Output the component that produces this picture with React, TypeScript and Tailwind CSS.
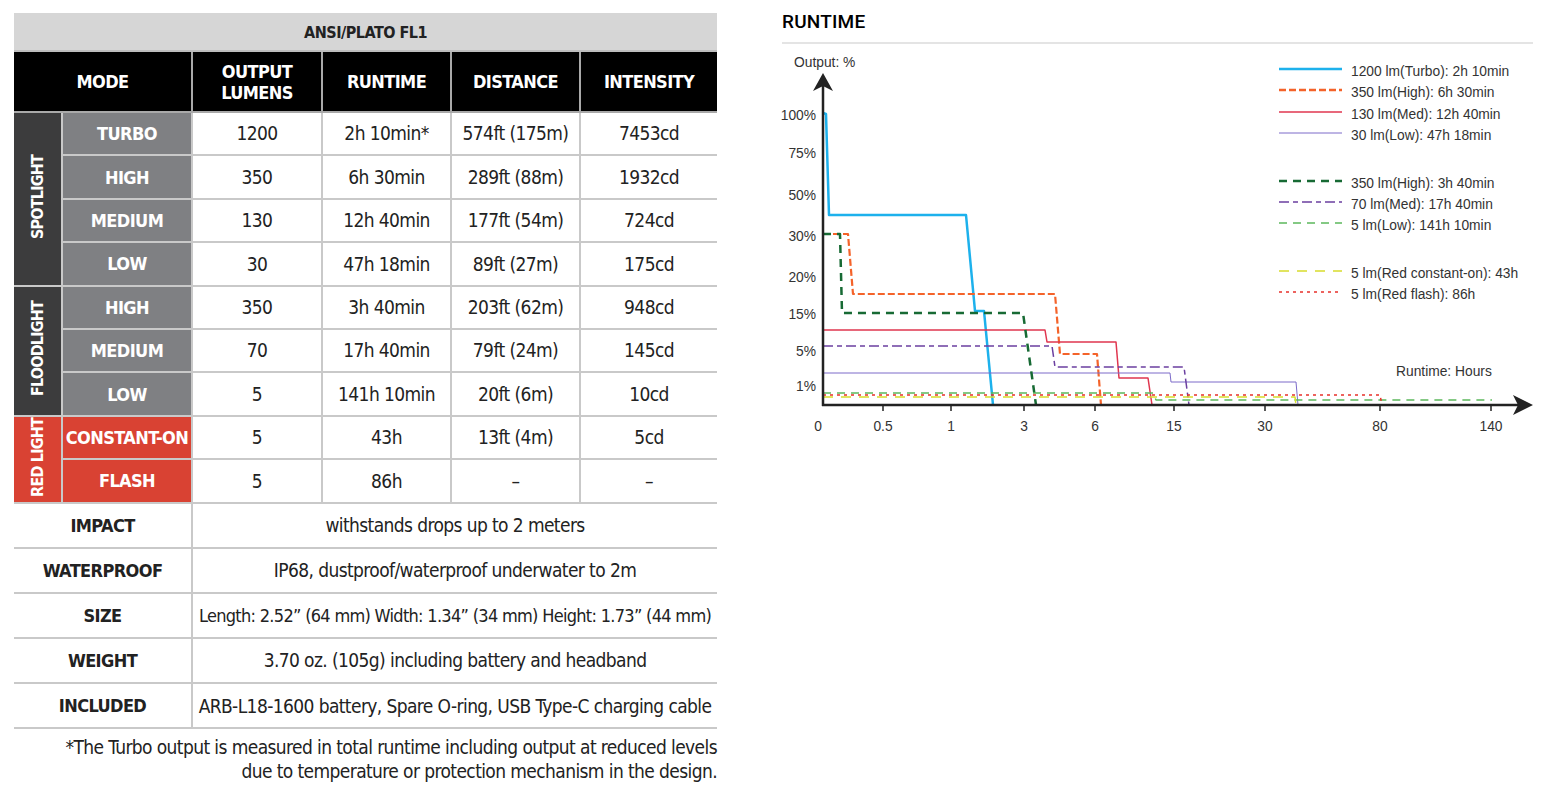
import React from 'react';

type Row = [string, string, string, string, string];

const groups: { name: string; groupBg: string; modeBg: string; rows: Row[] }[] = [
  {
    name: 'SPOTLIGHT',
    groupBg: 'bg-[#3c3c3d]',
    modeBg: 'bg-[#7f8083]',
    rows: [
      ['TURBO', '1200', '2h 10min*', '574ft (175m)', '7453cd'],
      ['HIGH', '350', '6h 30min', '289ft (88m)', '1932cd'],
      ['MEDIUM', '130', '12h 40min', '177ft (54m)', '724cd'],
      ['LOW', '30', '47h 18min', '89ft (27m)', '175cd'],
    ],
  },
  {
    name: 'FLOODLIGHT',
    groupBg: 'bg-[#3c3c3d]',
    modeBg: 'bg-[#7f8083]',
    rows: [
      ['HIGH', '350', '3h 40min', '203ft (62m)', '948cd'],
      ['MEDIUM', '70', '17h 40min', '79ft (24m)', '145cd'],
      ['LOW', '5', '141h 10min', '20ft (6m)', '10cd'],
    ],
  },
  {
    name: 'RED LIGHT',
    groupBg: 'bg-[#d94233]',
    modeBg: 'bg-[#d94233]',
    rows: [
      ['CONSTANT-ON', '5', '43h', '13ft (4m)', '5cd'],
      ['FLASH', '5', '86h', '–', '–'],
    ],
  },
];

const specs = [
  ['IMPACT', 'withstands drops up to 2 meters'],
  ['WATERPROOF', 'IP68, dustproof/waterproof underwater to 2m'],
  ['SIZE', 'Length: 2.52” (64 mm) Width: 1.34” (34 mm) Height: 1.73” (44 mm)'],
  ['WEIGHT', '3.70 oz. (105g) including battery and headband'],
  ['INCLUDED', 'ARB-L18-1600 battery, Spare O-ring, USB Type-C charging cable'],
];

// chart series, in page coordinates
const series = [
  { pts: '823,115 826,116 829,217 966,217 975,313 984,313 993,407', color: '#1db1ec', w: 2.5, dash: '' },
  { pts: '823,236 848,236 853,296 1055,296 1060,356 1097,356 1101,407', color: '#f4632a', w: 2.2, dash: '7 3' },
  { pts: '823,332 1045,332 1047,344 1116,344 1119,380 1148,380 1152,407', color: '#e0364f', w: 1.5, dash: '' },
  { pts: '823,375 1170,375 1171,384 1296,384 1298,407', color: '#7c6bc9', w: 1, dash: '' },
  { pts: '823,236 840,236 842,315 1023,315 1036,407', color: '#176a34', w: 2.5, dash: '8 6' },
  { pts: '823,348 1052,348 1055,369 1184,369 1189,407', color: '#6b3fa0', w: 1.5, dash: '10 4 5 4' },
  { pts: '823,395 1153,395 1156,402 1492,402', color: '#5cb85c', w: 1.5, dash: '8 6' },
  { pts: '823,399 1295,399 1296,407', color: '#d7dc2c', w: 1.5, dash: '10 8' },
  { pts: '823,397 1380,397 1382,407', color: '#e8302a', w: 1.5, dash: '3 4' },
];

const legend = [
  { y: 71, color: '#1db1ec', w: 2.5, dash: '', label: '1200 lm(Turbo): 2h 10min' },
  { y: 92, color: '#f4632a', w: 2.5, dash: '7 3', label: '350 lm(High): 6h 30min' },
  { y: 114, color: '#e0364f', w: 1.5, dash: '', label: '130 lm(Med): 12h 40min' },
  { y: 135, color: '#7c6bc9', w: 1, dash: '', label: '30 lm(Low): 47h 18min' },
  { y: 183, color: '#176a34', w: 2.5, dash: '8 6', label: '350 lm(High): 3h 40min' },
  { y: 204, color: '#6b3fa0', w: 1.5, dash: '10 4 5 4', label: '70 lm(Med): 17h 40min' },
  { y: 225, color: '#5cb85c', w: 1.5, dash: '8 6', label: '5 lm(Low): 141h 10min' },
  { y: 273, color: '#d7dc2c', w: 1.5, dash: '10 8', label: '5 lm(Red constant-on): 43h' },
  { y: 294, color: '#e8302a', w: 1.5, dash: '3 4', label: '5 lm(Red flash): 86h' },
];

const yTicks: [string, number][] = [
  ['100%', 115], ['75%', 153], ['50%', 195], ['30%', 236], ['20%', 277], ['15%', 314], ['5%', 351], ['1%', 386],
];
const xTicks: [string, number][] = [
  ['0.5', 883], ['1', 951], ['3', 1024], ['6', 1095], ['15', 1174], ['30', 1265], ['80', 1380], ['140', 1491],
];

function RuntimeChart() {
  return (
    <svg width={760} height={400} viewBox="782 46 760 400" overflow="visible" className="block">
      <g fontFamily="'Liberation Sans', Arial, sans-serif" fontSize={13.8} fill="#333">
        <text x={794} y={69}>Output: %</text>
        {yTicks.map(([l, y]) => (
          <text key={l} x={816} y={y + 7} textAnchor="end">{l}</text>
        ))}
        <text x={818} y={433} textAnchor="middle">0</text>
        {xTicks.map(([l, x]) => (
          <text key={l} x={x} y={433} textAnchor="middle">{l}</text>
        ))}
        <text x={1396} y={378}>Runtime: Hours</text>
        {legend.map((s) => (
          <text key={s.label} x={1351} y={s.y + 7}>{s.label}</text>
        ))}
      </g>
      {legend.map((s) => (
        <line key={s.label} x1={1279} x2={1342} y1={s.y} y2={s.y} stroke={s.color} strokeWidth={s.w} strokeDasharray={s.dash || undefined} />
      ))}
      {series.map((s, i) => (
        <polyline key={i} points={s.pts} fill="none" stroke={s.color} strokeWidth={s.w} strokeDasharray={s.dash || undefined} strokeLinejoin="round" />
      ))}
      {/* axes */}
      <line x1={823} y1={88} x2={823} y2={408} stroke="#222" strokeWidth={2.5} />
      <line x1={822} y1={407} x2={1518} y2={407} stroke="#222" strokeWidth={2.5} />
      <polygon points="823,75 813,93 823,88 833,93" fill="#222" />
      <polygon points="1533,407 1513,397 1518,407 1513,417" fill="#222" />
      {xTicks.map(([l, x]) => (
        <line key={l} x1={x} x2={x} y1={407} y2={413} stroke="#222" strokeWidth={1.5} />
      ))}
    </svg>
  );
}

export default function App() {
  const line = 'border-2 border-[#c9c9c9]';
  return (
    <div className="flex w-[1561px] h-[802px] bg-white overflow-hidden">
      <div className="pl-[14px] pt-[13px] w-[717px] shrink-0 font-['DejaVu_Sans_Condensed','Liberation_Sans',sans-serif] text-[#222] tracking-[-0.6px]">
        <table className="w-[703px] table-fixed border-collapse text-center">
          <colgroup>
            <col className="w-[48px]" />
            <col className="w-[130px]" />
            <col className="w-[130px]" />
            <col className="w-[129px]" />
            <col className="w-[129px]" />
            <col className="w-[137px]" />
          </colgroup>
          <tbody>
            <tr className="h-[38px] bg-[#d6d6d6]">
              <td colSpan={6} className="border-b-2 border-[#bdbdbd] font-bold text-[16px] tracking-[-0.5px] pt-[2px]">ANSI/PLATO FL1</td>
            </tr>
            <tr className="h-[61px] bg-black text-white font-bold text-[18px] leading-[21px]">
              <td colSpan={2} className="border-2 border-l-0 border-[#a9a9a9]">MODE</td>
              <td className="border-2 border-[#a9a9a9]">OUTPUT<br />LUMENS</td>
              <td className="border-2 border-[#a9a9a9]">RUNTIME</td>
              <td className="border-2 border-[#a9a9a9]">DISTANCE</td>
              <td className="border-2 border-r-0 border-[#a9a9a9]">INTENSITY</td>
            </tr>
            {groups.map((g) =>
              g.rows.map((r, i) => (
                <tr key={g.name + r[0]} className="h-[43.4px] text-[19px]">
                  {i === 0 && (
                    <td rowSpan={g.rows.length} className={`${g.groupBg} ${line} border-l-0 text-white font-bold text-[16px] leading-[18px]`}>
                      <span className="inline-block [writing-mode:vertical-rl] rotate-180 tracking-[-0.8px]">{g.name}</span>
                    </td>
                  )}
                  <td className={`${g.modeBg} ${line} text-white font-bold text-[18px] whitespace-nowrap`}>{r[0]}</td>
                  <td className={line}>{r[1]}</td>
                  <td className={line}>{r[2]}</td>
                  <td className={line}>{r[3]}</td>
                  <td className={`${line} border-r-0`}>{r[4]}</td>
                </tr>
              ))
            )}
            {specs.map(([k, v]) => (
              <tr key={k} className="h-[45.2px] text-[19px]">
                <td colSpan={2} className={`${line} border-l-0 font-bold text-[18px]`}>{k}</td>
                <td colSpan={4} className={`${line} border-r-0 whitespace-nowrap ${k === 'SIZE' ? 'text-[18px] tracking-[-0.7px]' : ''}`}>{v}</td>
              </tr>
            ))}
          </tbody>
        </table>
        <p className="text-right text-[19px] leading-[24px] mt-[6px]">
          *The Turbo output is measured in total runtime including output at reduced levels
          <br />
          due to temperature or protection mechanism in the design.
        </p>
      </div>
      <div className="ml-[65px] w-[751px] shrink-0 flex flex-col">
        <div className="pt-[10px] pb-[8px] border-b-2 border-[#e4e4e4] font-['Roboto',sans-serif] font-medium text-[19px] leading-[24px] text-black tracking-[0.2px]">
          RUNTIME
        </div>
        <RuntimeChart />
      </div>
    </div>
  );
}
